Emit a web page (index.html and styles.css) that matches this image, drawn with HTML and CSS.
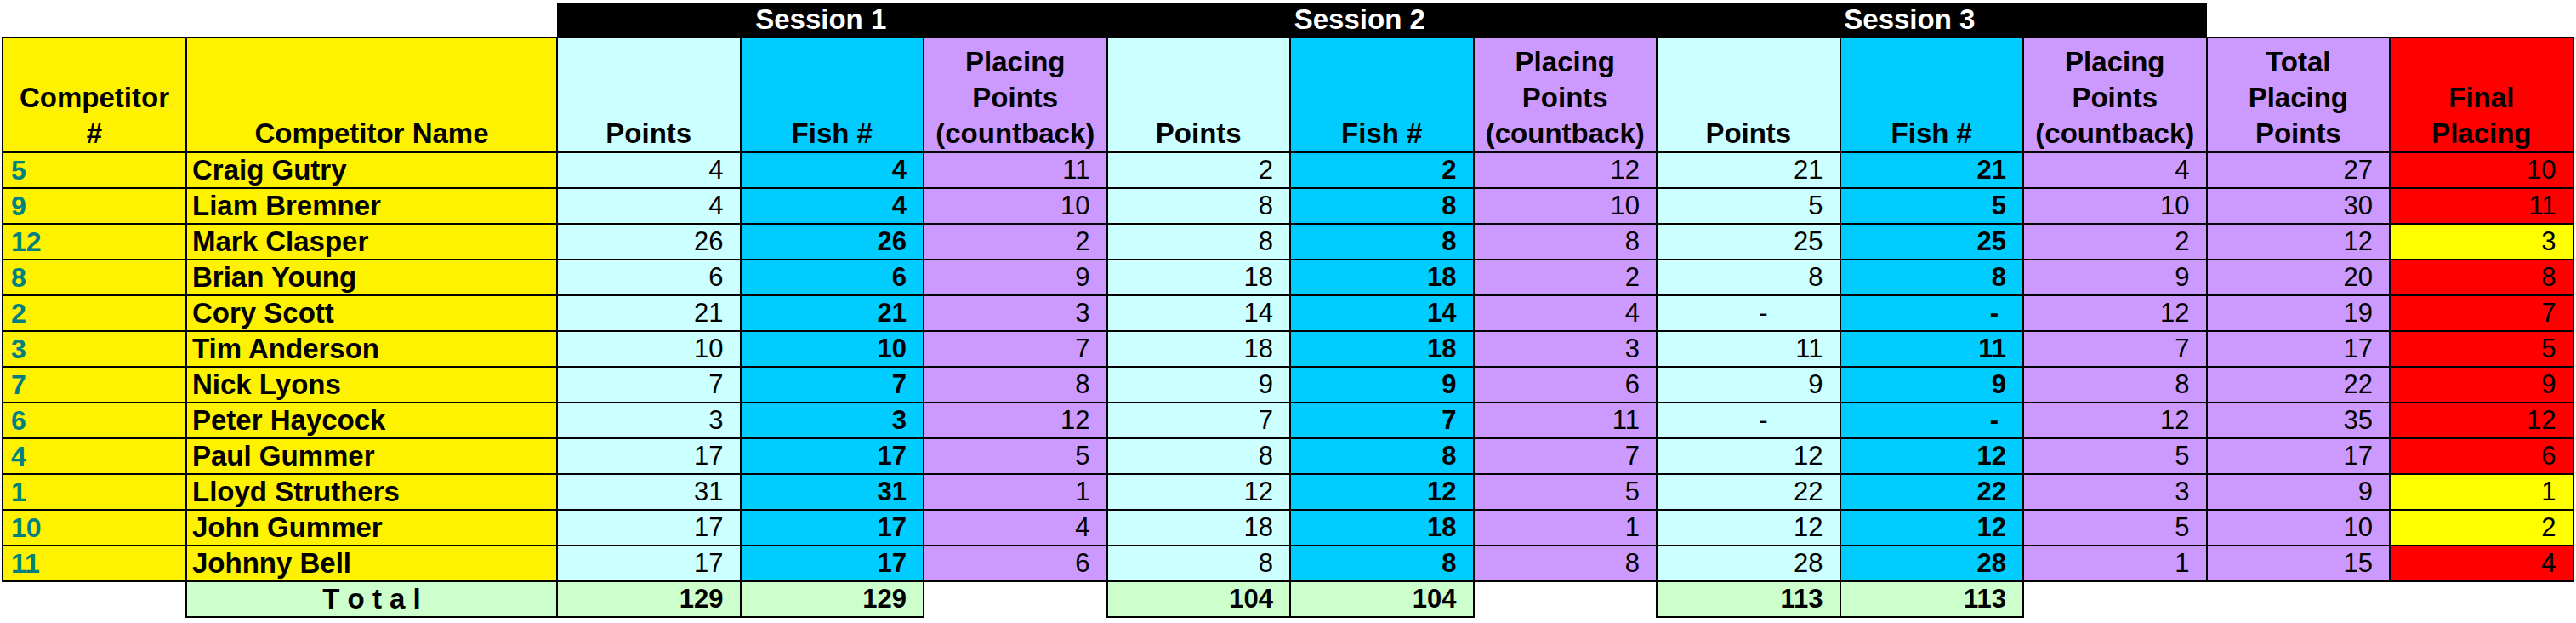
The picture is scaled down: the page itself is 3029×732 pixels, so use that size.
FILE: index.html
```html
<!DOCTYPE html>
<html>
<head>
<meta charset="utf-8">
<link rel="stylesheet" href="styles.css">
</head>
<body>
<div class="wrap">
<table class="sheet">
<colgroup>
<col class="c-num"><col class="c-name">
<col class="c-val"><col class="c-val"><col class="c-val">
<col class="c-val"><col class="c-val"><col class="c-val">
<col class="c-val"><col class="c-val"><col class="c-val">
<col class="c-val"><col class="c-val">
</colgroup>
<tr class="bar-row">
<td class="blank"></td><td class="blank"></td>
<td class="bar s1" colspan="3">Session 1</td>
<td class="bar s2" colspan="3">Session 2</td>
<td class="bar s3" colspan="3">Session 3</td>
<td class="blank"></td><td class="blank"></td>
</tr>
<tr class="head-row">
<th class="yel">Competitor<br>#</th>
<th class="yel">Competitor Name</th>
<th class="lc">Points</th><th class="cy">Fish #</th><th class="pu">Placing<br>Points<br>(countback)</th>
<th class="lc">Points</th><th class="cy">Fish #</th><th class="pu">Placing<br>Points<br>(countback)</th>
<th class="lc">Points</th><th class="cy">Fish #</th><th class="pu">Placing<br>Points<br>(countback)</th>
<th class="pu">Total<br>Placing<br>Points</th>
<th class="red">Final<br>Placing</th>
</tr>
<tr><td class="yel num">5</td><td class="yel name">Craig Gutry</td><td class="lc">4</td><td class="cy b">4</td><td class="pu">11</td><td class="lc">2</td><td class="cy b">2</td><td class="pu">12</td><td class="lc">21</td><td class="cy b">21</td><td class="pu">4</td><td class="pu">27</td><td class="red">10</td></tr>
<tr><td class="yel num">9</td><td class="yel name">Liam Bremner</td><td class="lc">4</td><td class="cy b">4</td><td class="pu">10</td><td class="lc">8</td><td class="cy b">8</td><td class="pu">10</td><td class="lc">5</td><td class="cy b">5</td><td class="pu">10</td><td class="pu">30</td><td class="red">11</td></tr>
<tr><td class="yel num">12</td><td class="yel name">Mark Clasper</td><td class="lc">26</td><td class="cy b">26</td><td class="pu">2</td><td class="lc">8</td><td class="cy b">8</td><td class="pu">8</td><td class="lc">25</td><td class="cy b">25</td><td class="pu">2</td><td class="pu">12</td><td class="top3">3</td></tr>
<tr><td class="yel num">8</td><td class="yel name">Brian Young</td><td class="lc">6</td><td class="cy b">6</td><td class="pu">9</td><td class="lc">18</td><td class="cy b">18</td><td class="pu">2</td><td class="lc">8</td><td class="cy b">8</td><td class="pu">9</td><td class="pu">20</td><td class="red">8</td></tr>
<tr><td class="yel num">2</td><td class="yel name">Cory Scott</td><td class="lc">21</td><td class="cy b">21</td><td class="pu">3</td><td class="lc">14</td><td class="cy b">14</td><td class="pu">4</td><td class="lc dash-pts">-</td><td class="cy b dash">-</td><td class="pu">12</td><td class="pu">19</td><td class="red">7</td></tr>
<tr><td class="yel num">3</td><td class="yel name">Tim Anderson</td><td class="lc">10</td><td class="cy b">10</td><td class="pu">7</td><td class="lc">18</td><td class="cy b">18</td><td class="pu">3</td><td class="lc">11</td><td class="cy b">11</td><td class="pu">7</td><td class="pu">17</td><td class="red">5</td></tr>
<tr><td class="yel num">7</td><td class="yel name">Nick Lyons</td><td class="lc">7</td><td class="cy b">7</td><td class="pu">8</td><td class="lc">9</td><td class="cy b">9</td><td class="pu">6</td><td class="lc">9</td><td class="cy b">9</td><td class="pu">8</td><td class="pu">22</td><td class="red">9</td></tr>
<tr><td class="yel num">6</td><td class="yel name">Peter Haycock</td><td class="lc">3</td><td class="cy b">3</td><td class="pu">12</td><td class="lc">7</td><td class="cy b">7</td><td class="pu">11</td><td class="lc dash-pts">-</td><td class="cy b dash">-</td><td class="pu">12</td><td class="pu">35</td><td class="red">12</td></tr>
<tr><td class="yel num">4</td><td class="yel name">Paul Gummer</td><td class="lc">17</td><td class="cy b">17</td><td class="pu">5</td><td class="lc">8</td><td class="cy b">8</td><td class="pu">7</td><td class="lc">12</td><td class="cy b">12</td><td class="pu">5</td><td class="pu">17</td><td class="red">6</td></tr>
<tr><td class="yel num">1</td><td class="yel name">Lloyd Struthers</td><td class="lc">31</td><td class="cy b">31</td><td class="pu">1</td><td class="lc">12</td><td class="cy b">12</td><td class="pu">5</td><td class="lc">22</td><td class="cy b">22</td><td class="pu">3</td><td class="pu">9</td><td class="top3">1</td></tr>
<tr><td class="yel num">10</td><td class="yel name">John Gummer</td><td class="lc">17</td><td class="cy b">17</td><td class="pu">4</td><td class="lc">18</td><td class="cy b">18</td><td class="pu">1</td><td class="lc">12</td><td class="cy b">12</td><td class="pu">5</td><td class="pu">10</td><td class="top3">2</td></tr>
<tr><td class="yel num">11</td><td class="yel name">Johnny Bell</td><td class="lc">17</td><td class="cy b">17</td><td class="pu">6</td><td class="lc">8</td><td class="cy b">8</td><td class="pu">8</td><td class="lc">28</td><td class="cy b">28</td><td class="pu">1</td><td class="pu">15</td><td class="red">4</td></tr>
<tr class="total-row">
<td class="blank"></td>
<td class="grn label">T o t a l</td>
<td class="grn b">129</td><td class="grn b">129</td><td class="blank"></td>
<td class="grn b">104</td><td class="grn b">104</td><td class="blank"></td>
<td class="grn b">113</td><td class="grn b">113</td><td class="blank"></td>
<td class="blank"></td><td class="blank"></td>
</tr>
</table>
</div>
</body>
</html>
```

FILE: styles.css
```css
html, body {
  margin: 0;
  padding: 0;
  background: #ffffff;
}

.wrap {
  padding: 3px 0 0 2px;
}

.sheet {
  border-collapse: collapse;
  table-layout: fixed;
  width: 3023px;
  font-family: "Liberation Sans", Arial, sans-serif;
  color: #000;
}

.c-num { width: 216px; }
.c-name { width: 436px; }
.c-val { width: 215.5px; }

.sheet td, .sheet th {
  border: 2px solid #000;
  padding: 0;
  overflow: hidden;
  white-space: nowrap;
}

.bar-row td { height: 40px; }

.sheet td.blank {
  border: none;
  background: transparent;
}

.sheet td.bar {
  background: #000;
  color: #fff;
  font-weight: bold;
  font-size: 33px;
  text-align: center;
  vertical-align: middle;
  line-height: 40px;
  border: none;
}

.sheet td.s1 { padding-right: 26px; }
.sheet td.s2, .sheet td.s3 { padding-right: 52px; }

.head-row th {
  height: 133px;
  font-size: 33px;
  font-weight: bold;
  line-height: 42px;
  vertical-align: bottom;
  text-align: center;
}

.sheet tr td {
  height: 40px;
  font-size: 31px;
  line-height: 40px;
  vertical-align: middle;
  text-align: right;
  padding-right: 19px;
}

.sheet td.dash { padding-right: 28px; }
.sheet td.dash-pts { padding-right: 84px; }

.sheet td.num {
  text-align: left;
  padding-left: 9px;
  padding-right: 0;
  color: #008080;
  font-weight: bold;
  font-size: 32px;
}

.sheet td.name {
  text-align: left;
  padding-left: 6px;
  padding-right: 0;
  font-weight: bold;
  font-size: 33px;
}

.sheet td.b { font-weight: bold; }

.sheet td.label {
  text-align: center;
  padding-right: 0;
  font-weight: bold;
  font-size: 33px;
}

.yel { background: #fff200; }
.lc { background: #ccffff; }
.cy { background: #00ccff; }
.pu { background: #cc99ff; }
.red { background: #ff0000; }
.top3 { background: #ffff00; }
.grn { background: #ccffcc; }
```
